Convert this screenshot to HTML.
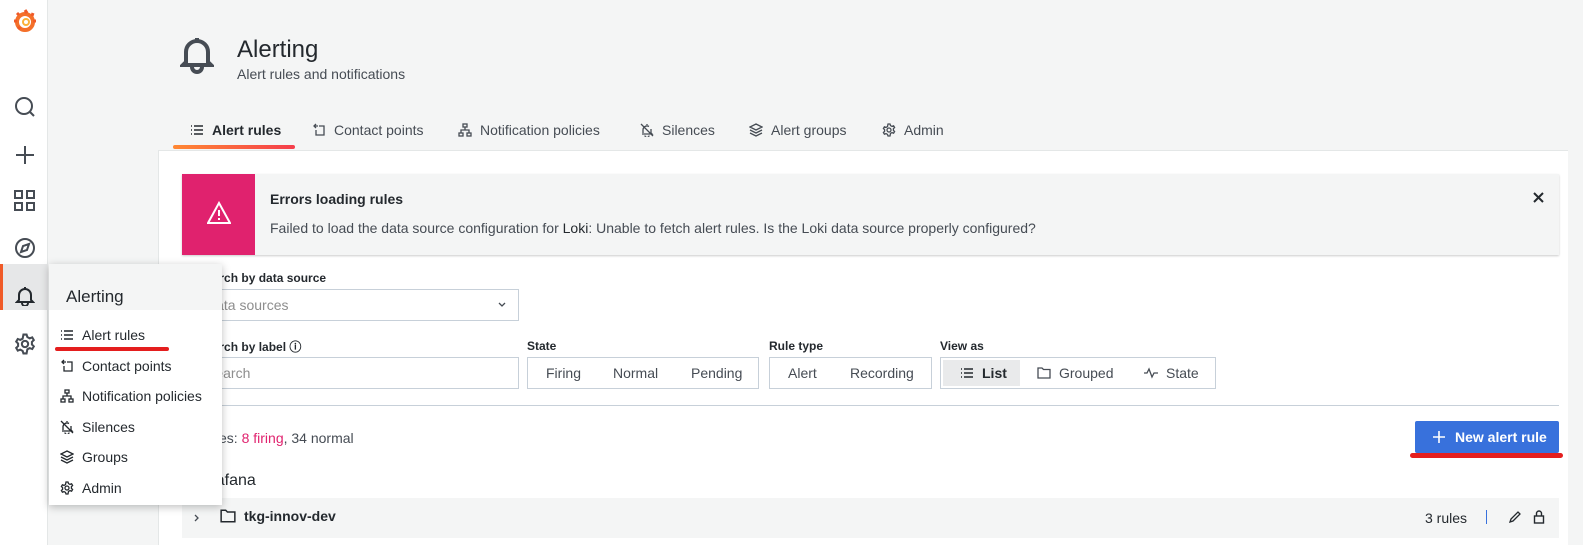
<!DOCTYPE html>
<html><head><meta charset="utf-8"><style>
*{box-sizing:border-box;margin:0;padding:0}
body{width:1583px;height:545px;overflow:hidden;background:#f4f5f5;font-family:"Liberation Sans",sans-serif;color:#24292e;position:relative}
.a{position:absolute}
.t{font-size:14px;color:#464c54;white-space:nowrap}
svg{display:block}
.i{display:inline-block;vertical-align:-2px;margin-right:8px}
.lbl{font-size:12px;font-weight:bold;color:#24292e}
.box{border:1px solid #c7d0d9;background:#fff}
</style></head><body>
<svg width="0" height="0" style="position:absolute"><defs>
<symbol id="list" viewBox="0 0 14 14"><path d="M1 3h1M1 7h1M1 11h1M4 3h9M4 7h9M4 11h9" stroke="currentColor" stroke-width="1.4" fill="none"/></symbol>
<symbol id="cp" viewBox="0 0 14 14"><path d="M4 1L2 3l2 2M2 3h4v0M7 3h5v9H4V7" stroke="currentColor" stroke-width="1.3" fill="none"/></symbol>
<symbol id="np" viewBox="0 0 14 14"><g stroke="currentColor" stroke-width="1.3" fill="none"><rect x="5" y="1" width="4" height="3"/><rect x="1" y="10" width="4" height="3"/><rect x="9" y="10" width="4" height="3"/><path d="M7 4v3M3 10V7h8v3"/></g></symbol>
<symbol id="sil" viewBox="0 0 14 14"><g stroke="currentColor" stroke-width="1.3" fill="none"><path d="M7 1v1M3 10V7a4 4 0 0 1 6-3.5M11 6v4l1 1H2M5 12.5a2 2 0 0 0 4 0M1 1l12 12"/></g></symbol>
<symbol id="lay" viewBox="0 0 14 14"><g stroke="currentColor" stroke-width="1.3" fill="none"><path d="M7 1l6 3-6 3-6-3zM1 7l6 3 6-3M1 10l6 3 6-3"/></g></symbol>
<symbol id="gear" viewBox="0 0 14 14"><g stroke="currentColor" stroke-width="1.3" fill="none"><circle cx="7" cy="7" r="2"/><path d="M6 1h2l.5 1.6 1.5.8 1.6-.6 1 1.7-1.2 1.2v1.6l1.2 1.2-1 1.7-1.6-.6-1.5.8L8 13H6l-.5-1.6-1.5-.8-1.6.6-1-1.7 1.2-1.2V6.7L1.4 5.5l1-1.7 1.6.6 1.5-.8z"/></g></symbol>
<symbol id="fold" viewBox="0 0 14 14"><path d="M1 2h4l1.5 1.5H13V12H1z" stroke="currentColor" stroke-width="1.3" fill="none"/></symbol>
<symbol id="pulse" viewBox="0 0 14 14"><path d="M0 7h3l2-4 3 8 2-4h4" stroke="currentColor" stroke-width="1.3" fill="none"/></symbol>
</defs></svg>
<!-- sidebar -->
<div class="a" style="left:0;top:0;width:48px;height:545px;background:#fff;border-right:1px solid #e4e7e7"></div>
<svg class="a" style="left:11px;top:7px" width="28" height="28" viewBox="0 0 28 28"><circle cx="14" cy="15" r="8" fill="none" stroke="#f4702a" stroke-width="4"/><circle cx="15" cy="15" r="3" fill="none" stroke="#fbb23a" stroke-width="2"/><path d="M14 3l2 3M22 6l-1 3M25 14h-3M6 6l2 2M3 14h3M7 22l2-2" stroke="#f05a28" stroke-width="3"/></svg>
<svg class="a" style="left:13px;top:95px" width="24" height="24" viewBox="0 0 24 24" fill="none" stroke="#464c54" stroke-width="2"><circle cx="11" cy="11" r="8"/><path d="M17 17l4 4"/></svg>
<svg class="a" style="left:14px;top:144px" width="22" height="22" viewBox="0 0 22 22" stroke="#464c54" stroke-width="2"><path d="M11 2v18M2 11h18"/></svg>
<svg class="a" style="left:14px;top:190px" width="22" height="22" viewBox="0 0 22 22" fill="none" stroke="#464c54" stroke-width="2"><rect x="1" y="1" width="7" height="7"/><rect x="13" y="1" width="7" height="7"/><rect x="1" y="13" width="7" height="7"/><rect x="13" y="13" width="7" height="7"/></svg>
<svg class="a" style="left:14px;top:237px" width="22" height="22" viewBox="0 0 22 22" fill="none" stroke="#464c54" stroke-width="2"><circle cx="11" cy="11" r="9"/><path d="M15 7l-2 6-6 2 2-6z"/></svg>
<div class="a" style="left:0;top:264px;width:48px;height:46px;background:#e6e7e8;border-left:3px solid #f05a28"></div>
<svg class="a" style="left:15px;top:286px" width="20" height="20" viewBox="0 0 20 20" fill="none" stroke="#24292e" stroke-width="2"><path d="M10 1v2M4 14V9a6 6 0 0 1 12 0v5l2 2H2z M7 17a3 3 0 0 0 6 0"/></svg>
<svg class="a" style="left:14px;top:333px" width="22" height="22" viewBox="0 0 14 14" color="#464c54"><use href="#gear"/></svg>
<!-- header -->
<svg class="a" style="left:180px;top:36px" width="34" height="38" viewBox="0 0 34 38" fill="none" stroke="#464c54" stroke-width="4"><path d="M17 2v4M6 26V16a11 11 0 0 1 22 0v10l3 3H3z M12 31a5 5 0 0 0 10 0"/></svg>
<div class="a" style="left:237px;top:36px;font-size:24px;color:#24292e">Alerting</div>
<div class="a t" style="left:237px;top:66px;font-size:14px">Alert rules and notifications</div>
<!-- tabs -->
<div class="a t" style="left:190px;top:122px;color:#24292e;font-weight:bold"><svg class="i" width="14" height="14"><use href="#list"/></svg>Alert rules</div>
<div class="a" style="left:173px;top:145px;width:122px;height:4px;border-radius:2px;background:linear-gradient(90deg,#ff8833,#f53e4c)"></div>
<div class="a t" style="left:312px;top:122px"><svg class="i" width="14" height="14"><use href="#cp"/></svg>Contact points</div>
<div class="a t" style="left:458px;top:122px"><svg class="i" width="14" height="14"><use href="#np"/></svg>Notification policies</div>
<div class="a t" style="left:640px;top:122px"><svg class="i" width="14" height="14"><use href="#sil"/></svg>Silences</div>
<div class="a t" style="left:749px;top:122px"><svg class="i" width="14" height="14"><use href="#lay"/></svg>Alert groups</div>
<div class="a t" style="left:882px;top:122px"><svg class="i" width="14" height="14"><use href="#gear"/></svg>Admin</div>
<!-- panel -->
<div class="a" style="left:158px;top:150px;width:1410px;height:395px;background:#fff;border-top:1px solid #e4e7e7;border-left:1px solid #e4e7e7"></div>
<div class="a" style="left:182px;top:174px;width:1377px;height:81px;background:#f4f5f5;box-shadow:0 1px 2px #ccc"></div>
<div class="a" style="left:182px;top:174px;width:73px;height:81px;background:#e0226e"></div>
<svg class="a" style="left:207px;top:201px" width="24" height="24" viewBox="0 0 24 24" fill="none" stroke="#fff" stroke-width="2"><path d="M12 2L1 22h22z M12 9v6 M12 17v2"/></svg>
<div class="a" style="left:270px;top:191px;font-size:14px;font-weight:bold">Errors loading rules</div>
<div class="a t" style="left:270px;top:220px">Failed to load the data source configuration for <span style="color:#24292e">Loki</span>: Unable to fetch alert rules. Is the Loki data source properly configured?</div>
<svg class="a" style="left:1533px;top:192px" width="11" height="11" viewBox="0 0 11 11" stroke="#24292e" stroke-width="2"><path d="M1 1l9 9M10 1l-9 9"/></svg>
<!-- filters -->
<div class="a lbl" style="left:198px;top:271px">Search by data source</div>
<div class="a box" style="left:198px;top:289px;width:321px;height:32px"></div>
<div class="a t" style="left:206px;top:297px;color:#8e8e8e">Data sources</div>
<svg class="a" style="left:498px;top:302px" width="8" height="6" viewBox="0 0 8 6" fill="none" stroke="#464c54" stroke-width="1.3"><path d="M1 1l3 3 3-3"/></svg>
<div class="a lbl" style="left:198px;top:338px">Search by label ⓘ</div>
<div class="a box" style="left:198px;top:357px;width:321px;height:32px"></div>
<div class="a t" style="left:206px;top:365px;color:#8e8e8e">Search</div>
<div class="a lbl" style="left:527px;top:339px">State</div>
<div class="a box" style="left:527px;top:357px;width:232px;height:32px"></div>
<div class="a t" style="left:546px;top:365px">Firing</div><div class="a t" style="left:613px;top:365px">Normal</div><div class="a t" style="left:691px;top:365px">Pending</div>
<div class="a lbl" style="left:769px;top:339px">Rule type</div>
<div class="a box" style="left:769px;top:357px;width:163px;height:32px"></div>
<div class="a t" style="left:788px;top:365px">Alert</div><div class="a t" style="left:850px;top:365px">Recording</div>
<div class="a lbl" style="left:940px;top:339px">View as</div>
<div class="a box" style="left:940px;top:357px;width:276px;height:32px"></div>
<div class="a" style="left:943px;top:360px;width:77px;height:26px;background:#e9eaeb"></div>
<div class="a t" style="left:960px;top:365px;color:#24292e;font-weight:bold"><svg class="i" width="14" height="14"><use href="#list"/></svg>List</div>
<div class="a t" style="left:1037px;top:365px"><svg class="i" width="14" height="14"><use href="#fold"/></svg>Grouped</div>
<div class="a t" style="left:1144px;top:365px"><svg class="i" width="14" height="14"><use href="#pulse"/></svg>State</div>
<div class="a" style="left:182px;top:405px;width:1377px;height:1px;background:#c7d0d9"></div>
<div class="a t" style="left:198px;top:430px">Rules: <span style="color:#e0226e">8 firing</span>, 34 normal</div>
<div class="a" style="left:1415px;top:421px;width:144px;height:32px;background:#3871dc;border-radius:2px;color:#fff;font-size:14px;font-weight:bold;line-height:32px;padding-left:18px"><svg class="i" width="12" height="12" viewBox="0 0 12 12" stroke="#fff" stroke-width="1.6" style="vertical-align:-1px;margin-right:10px"><path d="M6 0v12M0 6h12"/></svg>New alert rule</div>
<div class="a" style="left:1410px;top:453px;width:153px;height:5px;border-radius:3px;background:#e41e1e"></div>
<div class="a" style="left:198px;top:472px;font-size:16px">Grafana</div>
<div class="a" style="left:182px;top:498px;width:1377px;height:40px;background:#f4f5f5"></div>
<svg class="a" style="left:194px;top:514px" width="6" height="8" viewBox="0 0 6 8" fill="none" stroke="#464c54" stroke-width="1.3"><path d="M1 1l3 3-3 3"/></svg>
<div class="a t" style="left:220px;top:508px;color:#24292e"><svg class="i" width="16" height="16" style="vertical-align:-3px"><use href="#fold"/></svg><b>tkg-innov-dev</b></div>
<div class="a t" style="left:1425px;top:510px;color:#24292e">3 rules</div>
<div class="a" style="left:1486px;top:510px;width:1px;height:14px;background:#3871dc"></div>
<svg class="a" style="left:1508px;top:510px" width="14" height="14" viewBox="0 0 14 14" fill="none" stroke="#24292e" stroke-width="1.3"><path d="M2 12l1-3 7-7 2 2-7 7z"/></svg>
<svg class="a" style="left:1533px;top:509px" width="12" height="15" viewBox="0 0 12 15" fill="none" stroke="#24292e" stroke-width="1.4"><rect x="1.5" y="7" width="9" height="7"/><path d="M3.5 7V4.5a2.5 2.5 0 0 1 5 0V7"/></svg>
<!-- popup -->
<div class="a" style="left:49px;top:264px;width:173px;height:241px;background:#fff;box-shadow:0 2px 8px rgba(0,0,0,.25)"></div>
<div class="a" style="left:49px;top:264px;width:173px;height:46px;background:#f4f5f5"></div>
<div class="a" style="left:66px;top:287px;font-size:17px;color:#24292e">Alerting</div>
<div class="a t" style="left:60px;top:327px;color:#24292e"><svg class="i" width="14" height="14"><use href="#list"/></svg>Alert rules</div>
<div class="a" style="left:55px;top:347px;width:114px;height:4px;border-radius:2px;background:#e41e1e"></div>
<div class="a t" style="left:60px;top:358px;color:#24292e"><svg class="i" width="14" height="14"><use href="#cp"/></svg>Contact points</div>
<div class="a t" style="left:60px;top:388px;color:#24292e"><svg class="i" width="14" height="14"><use href="#np"/></svg>Notification policies</div>
<div class="a t" style="left:60px;top:419px;color:#24292e"><svg class="i" width="14" height="14"><use href="#sil"/></svg>Silences</div>
<div class="a t" style="left:60px;top:449px;color:#24292e"><svg class="i" width="14" height="14"><use href="#lay"/></svg>Groups</div>
<div class="a t" style="left:60px;top:480px;color:#24292e"><svg class="i" width="14" height="14"><use href="#gear"/></svg>Admin</div>
</body></html>
